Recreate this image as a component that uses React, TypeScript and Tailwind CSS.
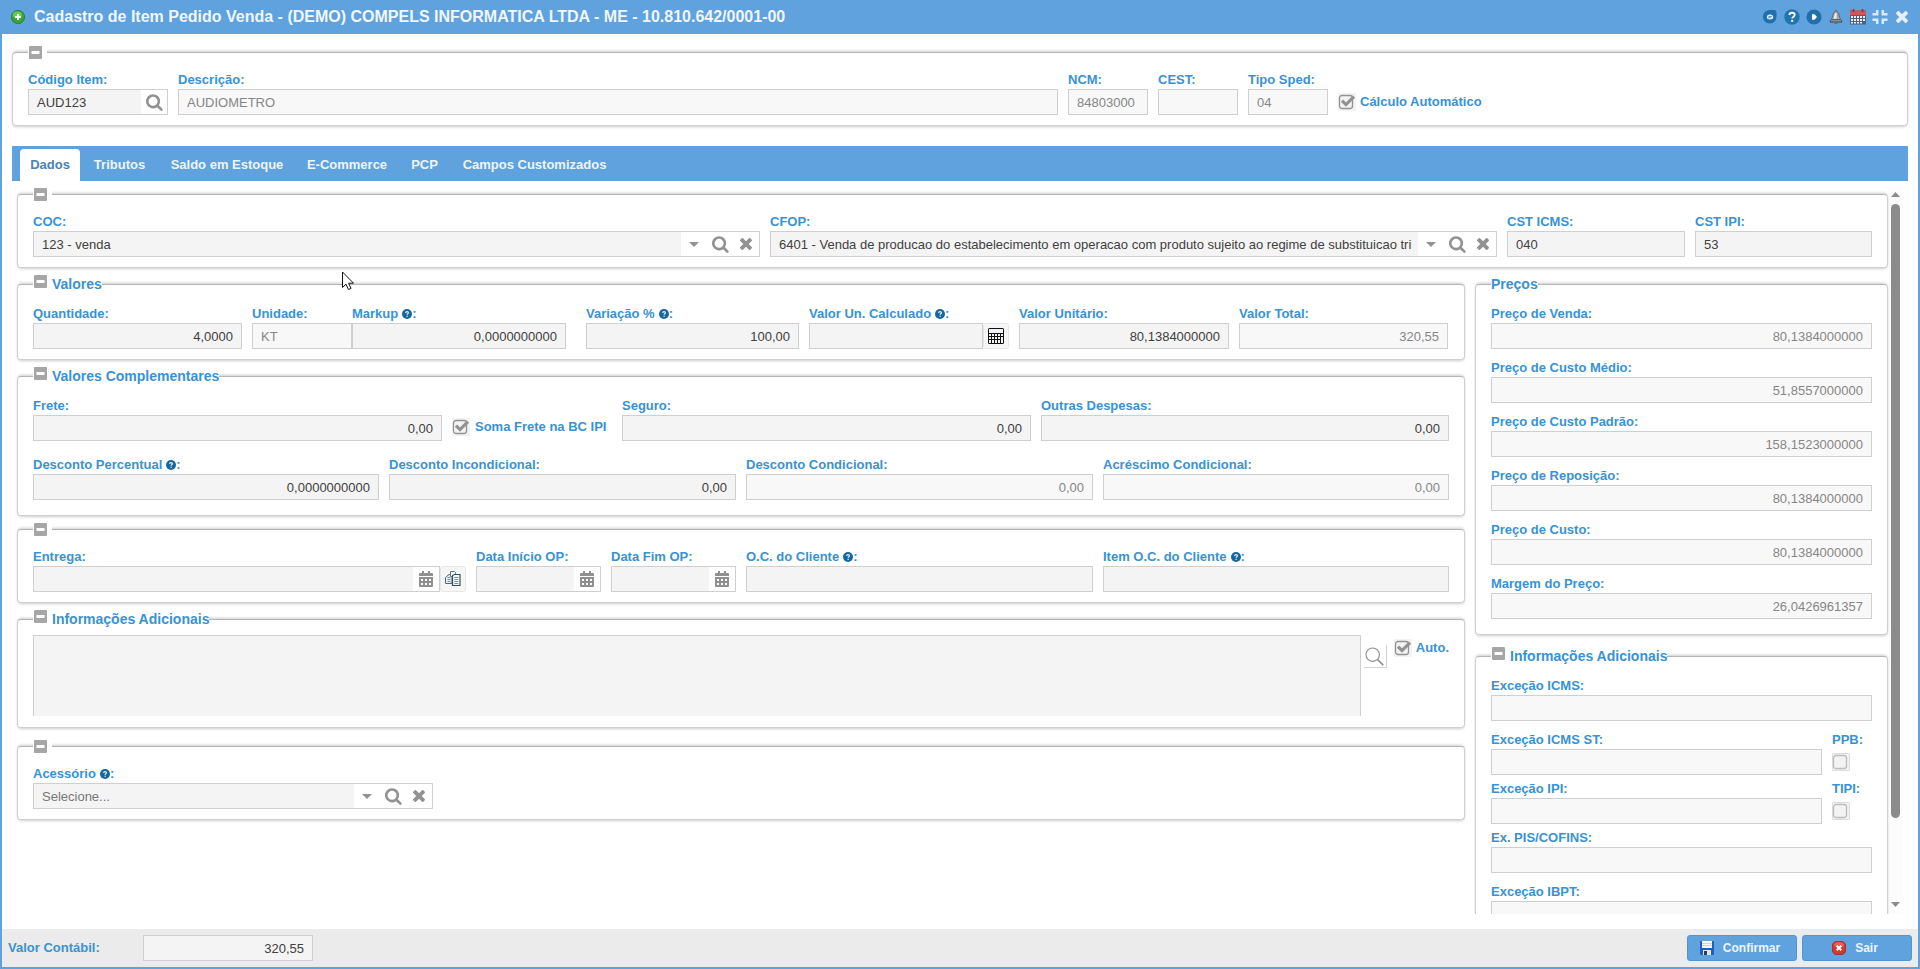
import type { ReactNode } from "react";
import clsx from "clsx";

const TABS = [
  { label: "Dados", className: "w-[60px]" },
  { label: "Tributos", className: "w-[79px]" },
  { label: "Saldo em Estoque", className: "w-[136px]" },
  { label: "E-Commerce", className: "w-[104px]" },
  { label: "PCP", className: "w-[51px]" },
  { label: "Campos Customizados", className: "w-[169px]" },
];

const PRECOS = [
  { label: "Preço de Venda:", value: "80,1384000000" },
  { label: "Preço de Custo Médio:", value: "51,8557000000" },
  { label: "Preço de Custo Padrão:", value: "158,1523000000" },
  { label: "Preço de Reposição:", value: "80,1384000000" },
  { label: "Preço de Custo:", value: "80,1384000000" },
  { label: "Margem do Preço:", value: "26,0426961357" },
];

/* ---------- Icons ---------- */

function SearchIcon() {
  return (
    <svg className="w-[18px] h-[18px] ml-px shrink-0" viewBox="0 0 1792 1792" fill="#929292">
      <path d="M1152 832q0-185-131.5-316.5t-316.5-131.5-316.5 131.5-131.5 316.5 131.5 316.5 316.5 131.5 316.5-131.5 131.5-316.5zm512 832q0 52-38 90t-90 38q-54 0-90-38l-343-342q-179 124-399 124-143 0-273.5-55.5t-225-150-150-225-55.5-273.5 55.5-273.5 150-225 225-150 273.5-55.5 273.5 55.5 225 150 150 225 55.5 273.5q0 220-124 399l343 343q37 37 37 90z" />
    </svg>
  );
}

function TimesIcon({ className }: { className: string }) {
  return (
    <svg className={clsx("shrink-0", className)} viewBox="302 366 1188 1188">
      <path d="M1490 1322q0 40-28 68l-136 136q-28 28-68 28t-68-28l-294-294-294 294q-28 28-68 28t-68-28l-136-136q-28-28-28-68t28-68l294-294-294-294q-28-28-28-68t28-68l136-136q28-28 68-28t68 28l294 294 294-294q28-28 68-28t68 28l136 136q28 28 28 68t-28 68l-294 294 294 294q28 28 28 68z" />
    </svg>
  );
}

function CalendarIcon() {
  return (
    <svg className="w-[14px] h-4 shrink-0" viewBox="0 0 14 16" fill="#8f8f8f">
      <path d="M3 0h2v2h4V0h2v2h2a1 1 0 0 1 1 1v2H0V3a1 1 0 0 1 1-1h2z" />
      <path
        fillRule="evenodd"
        d="M0 6h14v9a1 1 0 0 1-1 1H1a1 1 0 0 1-1-1zM2 8v2h2V8zM6 8v2h2V8zM10 8v2h2V8zM2 12v2h2v-2zM6 12v2h2v-2zM10 12v2h2v-2z"
      />
    </svg>
  );
}

function HelpIcon() {
  return (
    <svg className="w-[10px] h-[10px] ml-1 shrink-0" viewBox="0 0 16 16">
      <circle cx="8" cy="8" r="8" fill="#16679f" />
      <path d="M5.8 6.2c0-2.9 4.5-2.7 4.5-.2 0 1.6-2.1 1.6-2.1 3.2" fill="none" stroke="#e8f3fa" strokeWidth="1.9" />
      <rect x="7.2" y="10.7" width="2" height="1.9" fill="#e8f3fa" />
    </svg>
  );
}

function CollapseIcon() {
  return (
    <svg className="w-[13px] h-[13px] shrink-0" viewBox="0 0 13 13">
      <rect width="13" height="13" rx="1" fill="#a6a6a6" />
      <rect x="2.5" y="5" width="8" height="3" fill="#fff" />
    </svg>
  );
}

function CalculatorIcon() {
  return (
    <svg className="w-4 h-4" viewBox="0 0 16 16">
      <rect width="16" height="16" rx="1.5" fill="#111" />
      <rect x="1" y="1" width="14" height="4" fill="#f1f3f8" />
      <path
        fill="#f5f5f5"
        d="M1 6h2v2H1zM4 6h2v2H4zM7 6h2v2H7zM10 6h2v2h-2zM13 6h2v2h-2zM1 9h2v2H1zM4 9h2v2H4zM7 9h2v2H7zM10 9h2v2h-2zM13 9h2v6h-2zM1 12h2v3H1zM4 12h2v3H4zM7 12h2v3H7zM10 12h2v3h-2z"
      />
    </svg>
  );
}

function CopyIcon() {
  return (
    <svg className="w-4 h-4" viewBox="0 0 16 16">
      <path d="M1.5 5.5 4 3.5h3v9H.5v-6z" fill="#e6eef3" stroke="#4e687d" />
      <path d="M2.5 6.500h3M2.500 8.500h3M2.500 10.500h3" stroke="#5d9ac2" />
      <path d="M5.500.500h4l1 1v4h-5z" fill="#f8fbfc" stroke="#5d7689" />
      <path d="M7.500 4.500l2-1h5.500v11H7.500z" fill="#f1f8fb" stroke="#34516a" strokeWidth="1.200" />
      <path d="M9.300 6.500h4M9.300 8.500h4M9.300 10.500h4M9.300 12.500h4" stroke="#5d9ac2" />
    </svg>
  );
}

function PlusIcon() {
  return (
    <svg className="w-[14px] h-[14px]" viewBox="0 0 14 14">
      <circle cx="7" cy="7" r="6.6" fill="#36a832" stroke="#23762a" strokeWidth=".8" />
      <ellipse cx="6.4" cy="4.8" rx="4.6" ry="3.4" fill="#8fdb80" opacity=".6" />
      <path d="M7 4v6M4 7h6" stroke="#fff" strokeWidth="2" />
    </svg>
  );
}

function BellIcon() {
  return (
    <svg className="w-4 h-4" viewBox="0 0 16 16">
      <path
        d="M8 1.500c-.8 0-1.200.6-1.200 1.300C4.500 4 5 8 3.300 10.500h9.400C11 8 11.500 4 9.200 2.800 9.200 2.100 8.800 1.500 8 1.500z"
        fill="#9aa5ad"
        stroke="#56636d"
        strokeWidth=".9"
      />
      <path d="M7.300 4c-1.100 1.600-1 4-1.800 5.800h3.200V4z" fill="#e6ebee" />
      <rect x="1.800" y="10.800" width="12.400" height="3" rx=".8" fill="#4f5c66" />
      <path d="M3 11.800h10" stroke="#a9b4bb" strokeWidth=".8" />
      <rect x="6.500" y="13.800" width="3" height="1.300" fill="#66737d" />
    </svg>
  );
}

function HeaderIcons() {
  return (
    <div className="flex items-center gap-[6px]">
      <svg className="w-4 h-4" viewBox="0 0 16 16">
        <path d="M8 1h4a2.500 2.500 0 0 1 2.500 2.500V8A6.800 6.800 0 1 1 8 1z" fill="#2170ae" />
        <ellipse cx="8" cy="8" rx="3.200" ry="2.500" fill="#e6f1fa" />
        <path d="M6.500 7.500h3.400M6.200 8.700h2.600" stroke="#2170ae" strokeWidth=".7" />
      </svg>
      <svg className="w-4 h-4" viewBox="0 0 16 16">
        <circle cx="8" cy="8" r="7.7" fill="#1e75b0" />
        <path d="M5.4 6.1c.1-3.2 5.3-3 5.3-.2 0 1.8-2.5 1.8-2.5 3.6" fill="none" stroke="#fff" strokeWidth="1.8" />
        <rect x="7.2" y="10.9" width="2" height="2" fill="#fff" />
      </svg>
      <svg className="w-4 h-4" viewBox="0 0 16 16">
        <circle cx="8" cy="8" r="7.6" fill="#2170ae" />
        <path d="M6 5.2h2.500L11 8l-2.500 2.800H6z" fill="#fff" />
      </svg>
      <BellIcon />
      <svg className="w-4 h-4" viewBox="0 0 16 16">
        <rect y="1.5" width="16" height="14" fill="#4e5f86" />
        <rect y="1.5" width="16" height="4.5" fill="#d9534f" />
        <path d="M3.5 0v3M12.5 0v3" stroke="#6f3a4a" strokeWidth="1.6" />
        <path
          d="M1 7h2v2H1zM4 7h2v2H4zM7 7h2v2H7zM10 7h2v2h-2zM13 7h2v2h-2zM1 10h2v2H1zM4 10h2v2H4zM7 10h2v2H7zM10 10h2v2h-2zM13 10h2v2h-2zM1 13h2v1.5H1zM4 13h2v1.5H4zM7 13h2v1.5H7zM10 13h2v1.5h-2z"
          fill="#eef1f7"
        />
      </svg>
      <svg className="w-4 h-4" viewBox="0 0 16 16">
        <path
          d="M.5 5.2h4.7V1M15.5 5.2h-4.7V1M.5 10.8h4.7V15M15.5 10.8h-4.7V15"
          fill="none"
          stroke="#dcebf8"
          strokeWidth="2.4"
        />
      </svg>
      <span className="w-4 flex justify-center fill-[#e4eff9]">
        <TimesIcon className="w-3 h-3" />
      </span>
    </div>
  );
}

/* ---------- Form pieces ---------- */

function Label({ children, help }: { children: string; help?: boolean }) {
  return (
    <div className="h-5 flex items-center text-[13px] leading-[19px] font-bold text-[#3892d3] whitespace-nowrap pt-px">
      {children}
      {help && (
        <>
          <HelpIcon />:
        </>
      )}
    </div>
  );
}

interface FieldProps {
  label: string;
  help?: boolean;
  value?: string;
  align?: "left" | "right";
  disabled?: boolean;
  placeholder?: boolean;
  className?: string;
  triggers?: ReactNode;
  after?: ReactNode;
}

function Box({ value, align, disabled, placeholder, className, triggers }: Omit<FieldProps, "label">) {
  return (
    <div className={clsx("h-[26px] flex border border-[#cfcfcf] bg-white text-[13px]", className)}>
      <div
        className={clsx(
          "flex-1 min-w-0 px-2 leading-[25px] overflow-hidden whitespace-nowrap",
          align === "right" && "text-right",
          disabled ? "bg-[#f8f8f8] text-[#868686]" : "bg-[#f4f4f4]",
          !disabled && (placeholder ? "text-[#777777]" : "text-[#404040]")
        )}
      >
        {value}
      </div>
      {triggers}
    </div>
  );
}

function Field({ label, help, className, after, ...box }: FieldProps) {
  return (
    <div className={clsx("shrink-0", className)}>
      <Label help={help}>{label}</Label>
      <div className="flex">
        <Box {...box} className="flex-1 min-w-0" />
        {after}
      </div>
    </div>
  );
}

function Trigger({ children }: { children: ReactNode }) {
  return <span className="w-[26px] flex items-center justify-center">{children}</span>;
}

function ComboTriggers() {
  return (
    <>
      <Trigger>
        <svg className="w-[10px] h-[5px]" viewBox="0 0 10 5" fill="#929292">
          <path d="M0 0h10L5 5z" />
        </svg>
      </Trigger>
      <Trigger>
        <SearchIcon />
      </Trigger>
      <span className="w-[26px] flex items-center justify-center fill-[#929292]">
        <TimesIcon className="w-3 h-3" />
      </span>
    </>
  );
}

function SideButton({ children }: { children: ReactNode }) {
  return (
    <button className="w-[26px] h-[26px] flex items-center justify-center rounded-[3px] border border-[#e6e6e6] bg-[#f6f6f6]">
      {children}
    </button>
  );
}

function Check({ checked }: { checked?: boolean }) {
  return (
    <svg className="w-[18px] h-[18px] shrink-0" viewBox="0 0 18 18">
      <rect width="18" height="18" fill="#f3f3f3" />
      {!checked && <rect x=".5" y=".5" width="17" height="17" rx="1" fill="#f3f3f3" stroke="#dcdcdc" />}
      <rect
        x="1.5"
        y="2.5"
        width="13"
        height="13"
        rx="2.5"
        fill="none"
        stroke={checked ? "#929292" : "#bdbdbd"}
        strokeWidth="1.3"
      />
      {checked && <path d="m4 7.6 4 4 8-8" fill="none" stroke="#929292" strokeWidth="3.2" />}
    </svg>
  );
}

interface FieldsetProps {
  title?: string;
  collapsible?: boolean;
  className?: string;
  children: ReactNode;
}

function Fieldset({ title, collapsible = true, className, children }: FieldsetProps) {
  return (
    <section
      className={clsx(
        "relative shrink-0 rounded-[4px] border border-[#cfcfcf] border-t-[#b5b5b5] bg-white px-[15px] shadow-[0_-2px_3px_-1px_rgba(0,0,0,0.2),0_2px_3px_-1px_rgba(0,0,0,0.2)]",
        className
      )}
    >
      {/* Legend sits over the top border */}
      <div
        className={clsx(
          "absolute left-[15px] -top-[11px] h-5 flex items-start bg-white",
          collapsible && !title && "w-[19px]"
        )}
      >
        {collapsible && (
          <span className={clsx("pl-px", title ? "pt-px pr-[5px]" : "pt-1")}>
            <CollapseIcon />
          </span>
        )}
        {title && <span className="text-sm leading-5 font-bold text-[#3892d3] whitespace-nowrap">{title}</span>}
      </div>
      {children}
    </section>
  );
}

function FooterButton({ icon, children }: { icon: ReactNode; children: string }) {
  return (
    <button className="w-[110px] h-[26px] pr-1 flex items-center justify-center gap-[9px] rounded-[3px] border border-[#5094d0] bg-[#5fa2dd] text-xs font-bold text-[#eef5fb]">
      {icon}
      {children}
    </button>
  );
}

/* ---------- Sections ---------- */

function TitleBar() {
  return (
    <header className="h-[34px] shrink-0 flex items-center justify-between bg-[#5fa2dd] pl-[9px] pr-2">
      <div className="flex items-center gap-[9px]">
        <PlusIcon />
        <h1 className="text-base leading-[34px] font-bold text-[#f0f6fc] whitespace-nowrap">
          Cadastro de Item Pedido Venda - (DEMO) COMPELS INFORMATICA LTDA - ME - 10.810.642/0001-00
        </h1>
      </div>
      <HeaderIcons />
    </header>
  );
}

function ItemHeader() {
  return (
    <Fieldset className="mx-[10px] mt-[18px] pt-4 pb-[10px] flex gap-[10px]">
      <Field
        label="Código Item:"
        value="AUD123"
        className="w-[140px]"
        triggers={
          <Trigger>
            <SearchIcon />
          </Trigger>
        }
      />
      <Field label="Descrição:" value="AUDIOMETRO" disabled className="w-[880px]" />
      <Field label="NCM:" value="84803000" disabled className="w-20" />
      <Field label="CEST:" disabled className="w-20" />
      <Field label="Tipo Sped:" value="04" disabled className="w-20" />
      <div className="mt-6 h-[18px] flex items-center gap-1 text-[13px] font-bold text-[#3892d3]">
        <Check checked />
        Cálculo Automático
      </div>
    </Fieldset>
  );
}

function Valores() {
  return (
    <Fieldset title="Valores" className="pt-[18px] pb-[10px] flex">
      <Field label="Quantidade:" value="4,0000" align="right" className="w-[209px]" />
      <Field label="Unidade:" value="KT" disabled className="ml-[10px] w-[100px]" />
      <Field label="Markup" help value="0,0000000000" align="right" className="w-[214px]" />
      <Field label="Variação %" help value="100,00" align="right" className="ml-5 w-[213px]" />
      <Field
        label="Valor Un. Calculado"
        help
        className="ml-[10px] w-[200px]"
        after={
          <SideButton>
            <CalculatorIcon />
          </SideButton>
        }
      />
      <Field label="Valor Unitário:" value="80,1384000000" align="right" className="ml-[10px] w-[210px]" />
      <Field label="Valor Total:" value="320,55" align="right" disabled className="ml-[10px] w-[209px]" />
    </Fieldset>
  );
}

function ValoresComplementares() {
  return (
    <Fieldset title="Valores Complementares" className="mt-4 pt-[18px] pb-[15px]">
      <div className="flex">
        <Field label="Frete:" value="0,00" align="right" className="w-[409px]" />
        <div className="ml-[10px] w-[170px] mt-[23px] h-[18px] flex items-center gap-[5px] text-[13px] font-bold text-[#3892d3]">
          <Check checked />
          Soma Frete na BC IPI
        </div>
        <Field label="Seguro:" value="0,00" align="right" className="w-[409px]" />
        <Field label="Outras Despesas:" value="0,00" align="right" className="ml-[10px] w-[408px]" />
      </div>
      <div className="mt-[13px] flex gap-[10px]">
        <Field label="Desconto Percentual" help value="0,0000000000" align="right" className="w-[346px]" />
        <Field label="Desconto Incondicional:" value="0,00" align="right" className="w-[347px]" />
        <Field label="Desconto Condicional:" value="0,00" align="right" disabled className="w-[347px]" />
        <Field label="Acréscimo Condicional:" value="0,00" align="right" disabled className="w-[346px]" />
      </div>
    </Fieldset>
  );
}

function Entrega() {
  const calendar = (
    <Trigger>
      <CalendarIcon />
    </Trigger>
  );

  return (
    <Fieldset className="mt-[13px] pt-4 pb-[10px] flex gap-[10px]">
      <Field
        label="Entrega:"
        className="w-[433px]"
        triggers={calendar}
        after={
          <SideButton>
            <CopyIcon />
          </SideButton>
        }
      />
      <Field label="Data Início OP:" className="w-[125px]" triggers={calendar} />
      <Field label="Data Fim OP:" className="w-[125px]" triggers={calendar} />
      <Field label="O.C. do Cliente" help className="w-[347px]" />
      <Field label="Item O.C. do Cliente" help className="w-[346px]" />
    </Fieldset>
  );
}

function InfoAdicionais() {
  return (
    <Fieldset title="Informações Adicionais" className="mt-4 pt-[15px] pb-[11px] flex">
      <div className="w-[1328px] h-[81px] border border-b-0 border-[#cfcfcf] bg-[#f4f4f4]" />
      <button className="mt-[10px] ml-[3px] w-[23px] h-[23px] flex items-center justify-center border-r border-b border-[#d4d4d4]">
        <svg className="w-[19px] h-[19px]" viewBox="0 0 19 19" fill="none" stroke="#8f8f8f">
          <circle cx="7.7" cy="7.7" r="6.7" strokeWidth="1.1" />
          <path d="m12.5 12.5 5.7 5.7" strokeWidth="1.7" />
        </svg>
      </button>
      <div className="mt-1 ml-[7px] h-[18px] flex items-center gap-1 text-[13px] font-bold text-[#3892d3]">
        <Check checked />
        Auto.
      </div>
    </Fieldset>
  );
}

function Precos() {
  return (
    <Fieldset title="Preços" collapsible={false} className="pt-[18px] pb-[15px] flex flex-col gap-2">
      {PRECOS.map((p) => (
        <Field key={p.label} label={p.label} value={p.value} align="right" disabled />
      ))}
    </Fieldset>
  );
}

function Excecoes() {
  return (
    <Fieldset title="Informações Adicionais" className="mt-[21px] pt-[18px] pb-[15px]">
      <Field label="Exceção ICMS:" disabled />
      <div className="mt-2 flex gap-[10px]">
        <Field label="Exceção ICMS ST:" disabled className="w-[331px]" />
        <div>
          <Label>PPB:</Label>
          <div className="mt-1">
            <Check />
          </div>
        </div>
      </div>
      <div className="mt-[3px] flex gap-[10px]">
        <Field label="Exceção IPI:" disabled className="w-[331px]" />
        <div>
          <Label>TIPI:</Label>
          <div className="mt-1">
            <Check />
          </div>
        </div>
      </div>
      <Field label="Ex. PIS/COFINS:" disabled className="mt-[3px]" />
      <Field label="Exceção IBPT:" disabled className="mt-2" />
    </Fieldset>
  );
}

function ScrollBar() {
  return (
    <div className="w-[15px] mt-[5px] flex flex-col items-center bg-[#fcfcfc]">
      <svg className="mt-[6px] w-[9px] h-[5px] shrink-0" viewBox="0 0 9 5" fill="#8b8b8b">
        <path d="M4.5 0 9 5H0z" />
      </svg>
      <div className="mt-[7px] w-[9px] h-[614px] shrink-0 rounded-full bg-[#8b8b8b]" />
      <svg className="mt-auto mb-[7px] w-[9px] h-[5px] shrink-0" viewBox="0 0 9 5" fill="#8b8b8b">
        <path d="M0 0h9L4.500 5z" />
      </svg>
    </div>
  );
}

function Footer() {
  return (
    <footer className="mt-auto h-[38px] shrink-0 flex items-center bg-[#ebebeb] px-[6px]">
      <span className="w-[135px] pb-px text-[13px] leading-[19px] font-bold text-[#3892d3]">Valor Contábil:</span>
      <Box value="320,55" align="right" className="w-[170px]" />
      <div className="ml-auto flex gap-[5px]">
        <FooterButton
          icon={
            <svg className="w-[14px] h-[14px]" viewBox="0 0 14 14">
              <rect width="14" height="14" rx="1" fill="#1d5fc4" />
              <rect x="2" width="10" height="7" fill="#f4f8fc" />
              <path d="M2 2.5h10M2 4.5h10" stroke="#b9c9dc" strokeWidth=".8" />
              <rect x="3" y="9" width="8" height="5" fill="#dfe6ee" />
              <rect x="4" y="10" width="3" height="4" fill="#2a3e5c" />
            </svg>
          }
        >
          Confirmar
        </FooterButton>
        <FooterButton
          icon={
            <svg className="w-[14px] h-[14px]" viewBox="0 0 14 14">
              <rect x=".4" y=".4" width="13.2" height="13.2" rx="4.5" fill="#d8372d" stroke="#a61d1d" strokeWidth=".8" />
              <ellipse cx="7" cy="3.8" rx="5" ry="2.8" fill="#ef7a6c" opacity=".6" />
              <path d="m4.7 4.7 4.6 4.6M9.3 4.7 4.7 9.3" stroke="#fff" strokeWidth="2" />
            </svg>
          }
        >
          Sair
        </FooterButton>
      </div>
    </footer>
  );
}

export default function App() {
  return (
    <div className="relative w-full h-[969px] flex flex-col overflow-hidden border-x-2 border-b-2 border-[#5fa2dd] bg-white font-['Liberation_Sans',Arial,sans-serif]">
      <TitleBar />
      <ItemHeader />

      <nav className="mx-[10px] mt-5 h-[35px] shrink-0 flex items-end bg-[#5fa2dd] pl-2">
        {TABS.map((tab, i) => (
          <div
            key={tab.label}
            className={clsx(
              "h-8 pb-px flex items-center justify-center rounded-t-[4px] text-[13px] leading-[19px] font-bold whitespace-nowrap",
              tab.className,
              i === 0 ? "bg-white text-[#4783b8]" : "text-[#eef5fb]"
            )}
          >
            {tab.label}
          </div>
        ))}
      </nav>

      <main className="h-[733px] shrink-0 flex overflow-hidden pl-[15px]">
        <div className="w-[1871px] shrink-0 pt-[13px]">
          <Fieldset className="pt-4 pb-[10px] flex gap-[10px]">
            <Field label="COC:" value="123 - venda" className="w-[727px]" triggers={<ComboTriggers />} />
            <Field
              label="CFOP:"
              value="6401 - Venda de producao do estabelecimento em operacao com produto sujeito ao regime de substituicao tri"
              className="w-[727px]"
              triggers={<ComboTriggers />}
            />
            <Field label="CST ICMS:" value="040" className="w-[178px]" />
            <Field label="CST IPI:" value="53" className="w-[177px]" />
          </Fieldset>

          <div className="mt-4 flex items-start gap-[10px]">
            <div className="w-[1448px] flex flex-col">
              <Valores />
              <ValoresComplementares />
              <Entrega />
              <InfoAdicionais />
              <Fieldset className="mt-[18px] pt-4 pb-[10px]">
                <Field
                  label="Acessório"
                  help
                  value="Selecione..."
                  placeholder
                  className="w-[400px]"
                  triggers={<ComboTriggers />}
                />
              </Fieldset>
            </div>
            <div className="w-[413px] flex flex-col">
              <Precos />
              <Excecoes />
            </div>
          </div>
        </div>
        <ScrollBar />
      </main>

      <Footer />

      {/* Mouse pointer */}
      <svg className="absolute left-[340px] top-[271px] w-3 h-[19px]" viewBox="0 0 12 19">
        <path
          d="M.5 1v15.5l3.500-3.300 2.400 5.300 2.600-1.100-2.400-5.200h4.900z"
          fill="#fff"
          stroke="#111"
          strokeWidth="1"
        />
      </svg>
    </div>
  );
}
